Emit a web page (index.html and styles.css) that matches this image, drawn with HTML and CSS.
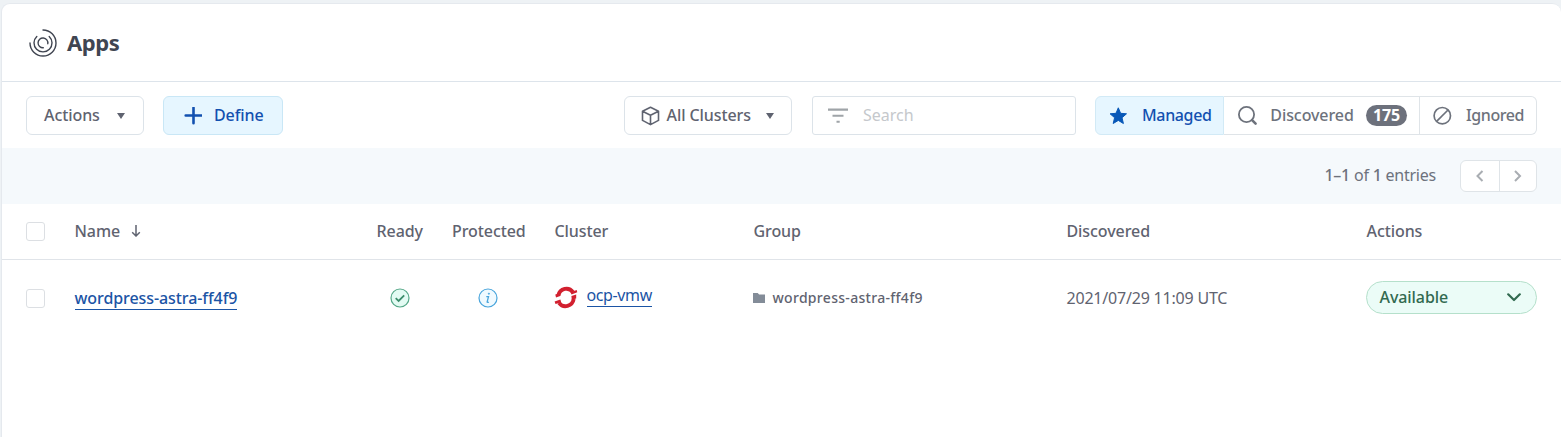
FILE: index.html
```html
<!DOCTYPE html>
<html lang="en">
<head>
<meta charset="utf-8">
<title>Apps</title>
<link rel="stylesheet" href="styles.css">
</head>
<body>
<main class="card">
  <header class="header">
    <svg class="logo" width="28" height="28" viewBox="0 0 28 28" fill="none" stroke="currentColor" stroke-width="1.4" stroke-linecap="round"><path d="M14 1A13 13 0 1 1 1 14"/><path d="M20.2 7.400A9 9 0 1 1 7.800 7.400"/><path d="M14.300 18.800A4.900 4.900 0 1 1 18.800 14.700"/></svg>
    <h1 class="title">Apps</h1>
  </header>
  <section class="toolbar">
    <button class="btn actions"><span>Actions</span><i class="caret"></i></button>
    <button class="btn define"><svg width="18" height="18" viewBox="0 0 18 18" fill="none" stroke="currentColor" stroke-width="2.6" stroke-linecap="round"><path d="M9.500 .7v15.6M1.700 8.500h15.6"/></svg><span>Define</span></button>
    <button class="btn clusters"><svg width="19" height="20" viewBox="0 0 19 20" fill="none" stroke="currentColor" stroke-width="1.6" stroke-linejoin="round"><path d="M9.5 1.2l8 4v9.2l-8 4.2-8-4.2V5.200zM1.500 5.200l8 4.100 8-4.100M9.500 9.300v9.300"/></svg><span>All Clusters</span><i class="caret"></i></button>
    <div class="search"><svg width="20" height="16" viewBox="0 0 20 16" fill="#9fa4a8"><path d="M0 .5h20v2.200H0zM4.500 6.700h11v2.100h-11zM8.500 12.700h3.200v2H8.500z"/></svg><span>Search</span></div>
    <div class="tabs">
      <button class="tab managed"><svg width="20" height="20" viewBox="0 0 20 20" fill="currentColor" stroke="currentColor" stroke-width="1" stroke-linejoin="round"><path d="M10.300 1.800l2.300 5.500 5.900.5-4.500 3.900 1.400 5.800-5.100-3.100-5.100 3.100 1.400-5.800-4.500-3.900 5.900-.5z"/></svg><span>Managed</span></button>
      <button class="tab discovered"><svg width="20" height="20" viewBox="0 0 20 20" fill="none" stroke="currentColor" stroke-width="1.800" stroke-linecap="round"><circle cx="8.500" cy="8.500" r="7.600"/><path d="M14.100 14.100l3.500 3.500" stroke-width="2.600"/></svg><span>Discovered</span><b class="count">175</b></button>
      <button class="tab ignored"><svg width="20" height="20" viewBox="0 0 20 20" fill="none" stroke="currentColor" stroke-width="1.700"><circle cx="10.300" cy="9.700" r="8.200"/><path d="M4.600 15.400L16 4"/></svg><span>Ignored</span></button>
    </div>
  </section>
  <section class="pager">
    <span class="entries"><b>1–1</b> of <b>1</b> entries</span>
    <div class="pages">
      <button class="page"><svg width="8" height="12" viewBox="0 0 8 12"><path d="M6.500 1L1.500 6l5 5"/></svg></button>
      <button class="page"><svg width="8" height="12" viewBox="0 0 8 12"><path d="M1 1l5 5-5 5"/></svg></button>
    </div>
  </section>
  <div class="row head">
    <i class="check"></i>
    <span class="name">Name<svg width="10" height="12" viewBox="0 0 10 12" fill="none" stroke="currentColor" stroke-width="1.500"><path d="M5 0v11M1.200 7.300L5 11l3.800-3.700"/></svg></span>
    <span>Ready</span><span>Protected</span><span>Cluster</span><span>Group</span><span>Discovered</span><span class="last">Actions</span>
  </div>
  <div class="row item">
    <i class="check"></i>
    <span><a class="link app">wordpress-astra-ff4f9</a></span>
    <span class="state"><svg class="ready" width="20" height="20" viewBox="0 0 20 20"><circle cx="10" cy="10" r="9" fill="#e3fbf3" stroke="#55a888" stroke-width="1.200"/><path d="M5.700 10.200l2.900 2.800 5.600-5.600" fill="none" stroke="#3d8d6c" stroke-width="1.800"/></svg></span>
    <span class="state info"><svg width="20" height="20" viewBox="0 0 20 20" fill="none" stroke="#49a5dc"><circle cx="10" cy="10" r="9" fill="#f0faff" stroke-width="1.200"/><path d="M8.300 8.600h2.200l-1.400 5.600q.5.600 1.700-.3" stroke-width="1.300"/><circle cx="10.900" cy="5.700" r=".6" fill="#49a5dc" stroke-width=".8"/></svg></span>
    <span class="cluster"><svg width="24" height="23" viewBox="0 0 24 23" fill="none"><path d="M4.300 9.500A8.300 8.700 0 0 1 19 6.200M19.700 13A8.300 8.700 0 0 1 5 16.800" stroke="#d2202f" stroke-width="3.900"/><path d="M1.300 8.600L6.500 7l-.3 3L2 11.400zM16.500 6.300l6.200-2.200.6 2.200-5.800 2.200zM17.400 10l4.800-1.500v4.100l-4.400 1.200zM.6 15.600l5.800-2.200.8 3L1.500 18z" fill="#d2202f"/></svg><a class="link">ocp-vmw</a></span>
    <span class="group"><svg width="12" height="10" viewBox="0 0 12 10"><path d="M0 0h4.700l1.400 1.500H12V10H0z" fill="#838c98"/></svg>wordpress-astra-ff4f9</span>
    <span class="date">2021/07/29 11:09 UTC</span>
    <button class="status"><span>Available</span><svg width="14" height="9" viewBox="0 0 14 9" fill="none" stroke="currentColor" stroke-width="2.200" stroke-linecap="round" stroke-linejoin="round"><path d="M1.200 1.300L7 7l5.800-5.700"/></svg></button>
  </div>
</main>
</body>
</html>
```

FILE: styles.css
```css
* { box-sizing: border-box; }
body {
  margin: 0;
  padding: 3px 0 0 1px;
  height: 437px;
  overflow: hidden;
  background: #eef2f5;
  color: #5f6370;
  font: 500 16px/22px "Noto Sans", sans-serif;
  letter-spacing: -.08px;
}
button { font: inherit; letter-spacing: inherit; color: inherit; padding: 0; margin: 0; cursor: pointer; }
svg { flex: none; display: block; }
.card {
  height: 440px;
  background: #fff;
  border: 1px solid #e5e9ee;
  border-right: 0;
  border-radius: 9px 9px 0 0;
}
.header {
  height: 78px;
  display: flex;
  align-items: center;
  padding-left: 26.500px;
  border-bottom: 1px solid #dde4eb;
  color: #404551;
}
.title { margin: 0 0 0 10.500px; padding-bottom: 2px; font-size: 22px; line-height: 30px; font-weight: 700; letter-spacing: -.4px; }
.toolbar { display: flex; height: 66px; padding: 14px 24px 0; }
.btn {
  height: 39px;
  display: flex;
  align-items: center;
  border: 1px solid #dce3e9;
  border-radius: 6px;
  background: #fff;
}
.btn span, .search span, .tab span { padding-bottom: 2px; }
.caret { border: 4.500px solid transparent; border-top: 6px solid #5f6370; border-bottom: 0; margin-left: auto; }
.actions { width: 118px; padding: 0 18px 0 17px; }
.define {
  width: 120px;
  margin-left: 19px;
  padding-left: 20px;
  gap: 12px;
  background: #e6f6ff;
  border-color: #c9e7f6;
  color: #1250b0;
}
.clusters { width: 168px; margin-left: auto; padding: 0 17px 0 16px; gap: 6.500px; }
.search {
  width: 264px;
  height: 39px;
  margin-left: 20px;
  padding-left: 15px;
  display: flex;
  align-items: center;
  gap: 15px;
  border: 1px solid #dce3e9;
  border-radius: 3px;
  color: #c5c8cc;
  font-weight: 400;
  letter-spacing: 0;
}
.tabs { display: flex; height: 39px; margin-left: 19px; width: 442px; }
.tab { display: flex; align-items: center; border: 1px solid #dfe4e8; border-left: 0; background: #fff; color: #6d727c; }
.managed { width: 129px; padding-left: 12px; gap: 14px; background: #e6f6ff; border: 1px solid #d2eaf6; border-radius: 6px 0 0 6px; color: #1250b0; letter-spacing: -.35px; }
.managed svg { color: #0858b8; }
.discovered { width: 196px; padding-left: 14px; gap: 12.300px; }
.ignored { width: 117px; padding-left: 12px; gap: 14px; border-radius: 0 6px 6px 0; letter-spacing: -.4px; }
.count { width: 41px; height: 21px; border-radius: 11px; background: #6d717c; color: #fff; line-height: 20px; text-align: center; }
.pager {
  height: 56px;
  padding-right: 24px;
  display: flex;
  align-items: center;
  justify-content: flex-end;
  gap: 24px;
  background: #f5f9fc;
  font-weight: 400;
  color: #6d727c;
}
.entries { padding-bottom: 2px; letter-spacing: -.23px; }
.entries b { font-weight: 500; }
.pages { display: flex; width: 77px; height: 32px; border: 1px solid #dfe4e8; border-radius: 6px; background: #fff; }
.page { flex: none; width: 37px; display: flex; align-items: center; justify-content: center; border: 0; background: none; }
.page:first-child { width: 38px; }
.page + .page { border-left: 1px solid #dfe4e8; }
.page path { fill: none; stroke: #a9adb2; stroke-width: 2; }
.row {
  display: grid;
  grid-template-columns: 48.500px 302px 75.500px 102.500px 199px 313px 299.500px 171px;
  align-items: center;
  padding-left: 24px;
}
.head { height: 56px; border-bottom: 1px solid #e0e4e9; }
.head span { padding-bottom: 2px; }
.head .last { padding-left: .5px; }
.item { height: 76px; }
.check { width: 19px; height: 19px; border: 1px solid #dcdfe3; border-radius: 3px; }
.name { display: flex; align-items: center; gap: 10.500px; }
.link { color: #1b54a5; text-decoration: none; border-bottom: 1px solid #1b54a5; }
.state { padding-left: 13px; }
.state.info { padding-left: 26px; }
.app { display: inline-block; line-height: 22px; }
.cluster { display: flex; align-items: center; gap: 8.500px; font-weight: 400; margin: -2px 0 0 -.5px; letter-spacing: -.38px; }
.cluster .link { line-height: 21px; margin-bottom: 2px; }
.group { display: flex; align-items: center; gap: 8px; margin-left: -1px; font-size: 14px; letter-spacing: .3px; }
.date { font-weight: 400; letter-spacing: -.2px; }
.status {
  width: 171px;
  height: 33px;
  margin: -2px 0 0 -.5px;
  padding: 0 15px 0 13px;
  display: flex;
  align-items: center;
  justify-content: space-between;
  border: 1px solid #b5e0cb;
  border-radius: 17px;
  background: #ebfcf7;
  color: #326a50;
}
```
